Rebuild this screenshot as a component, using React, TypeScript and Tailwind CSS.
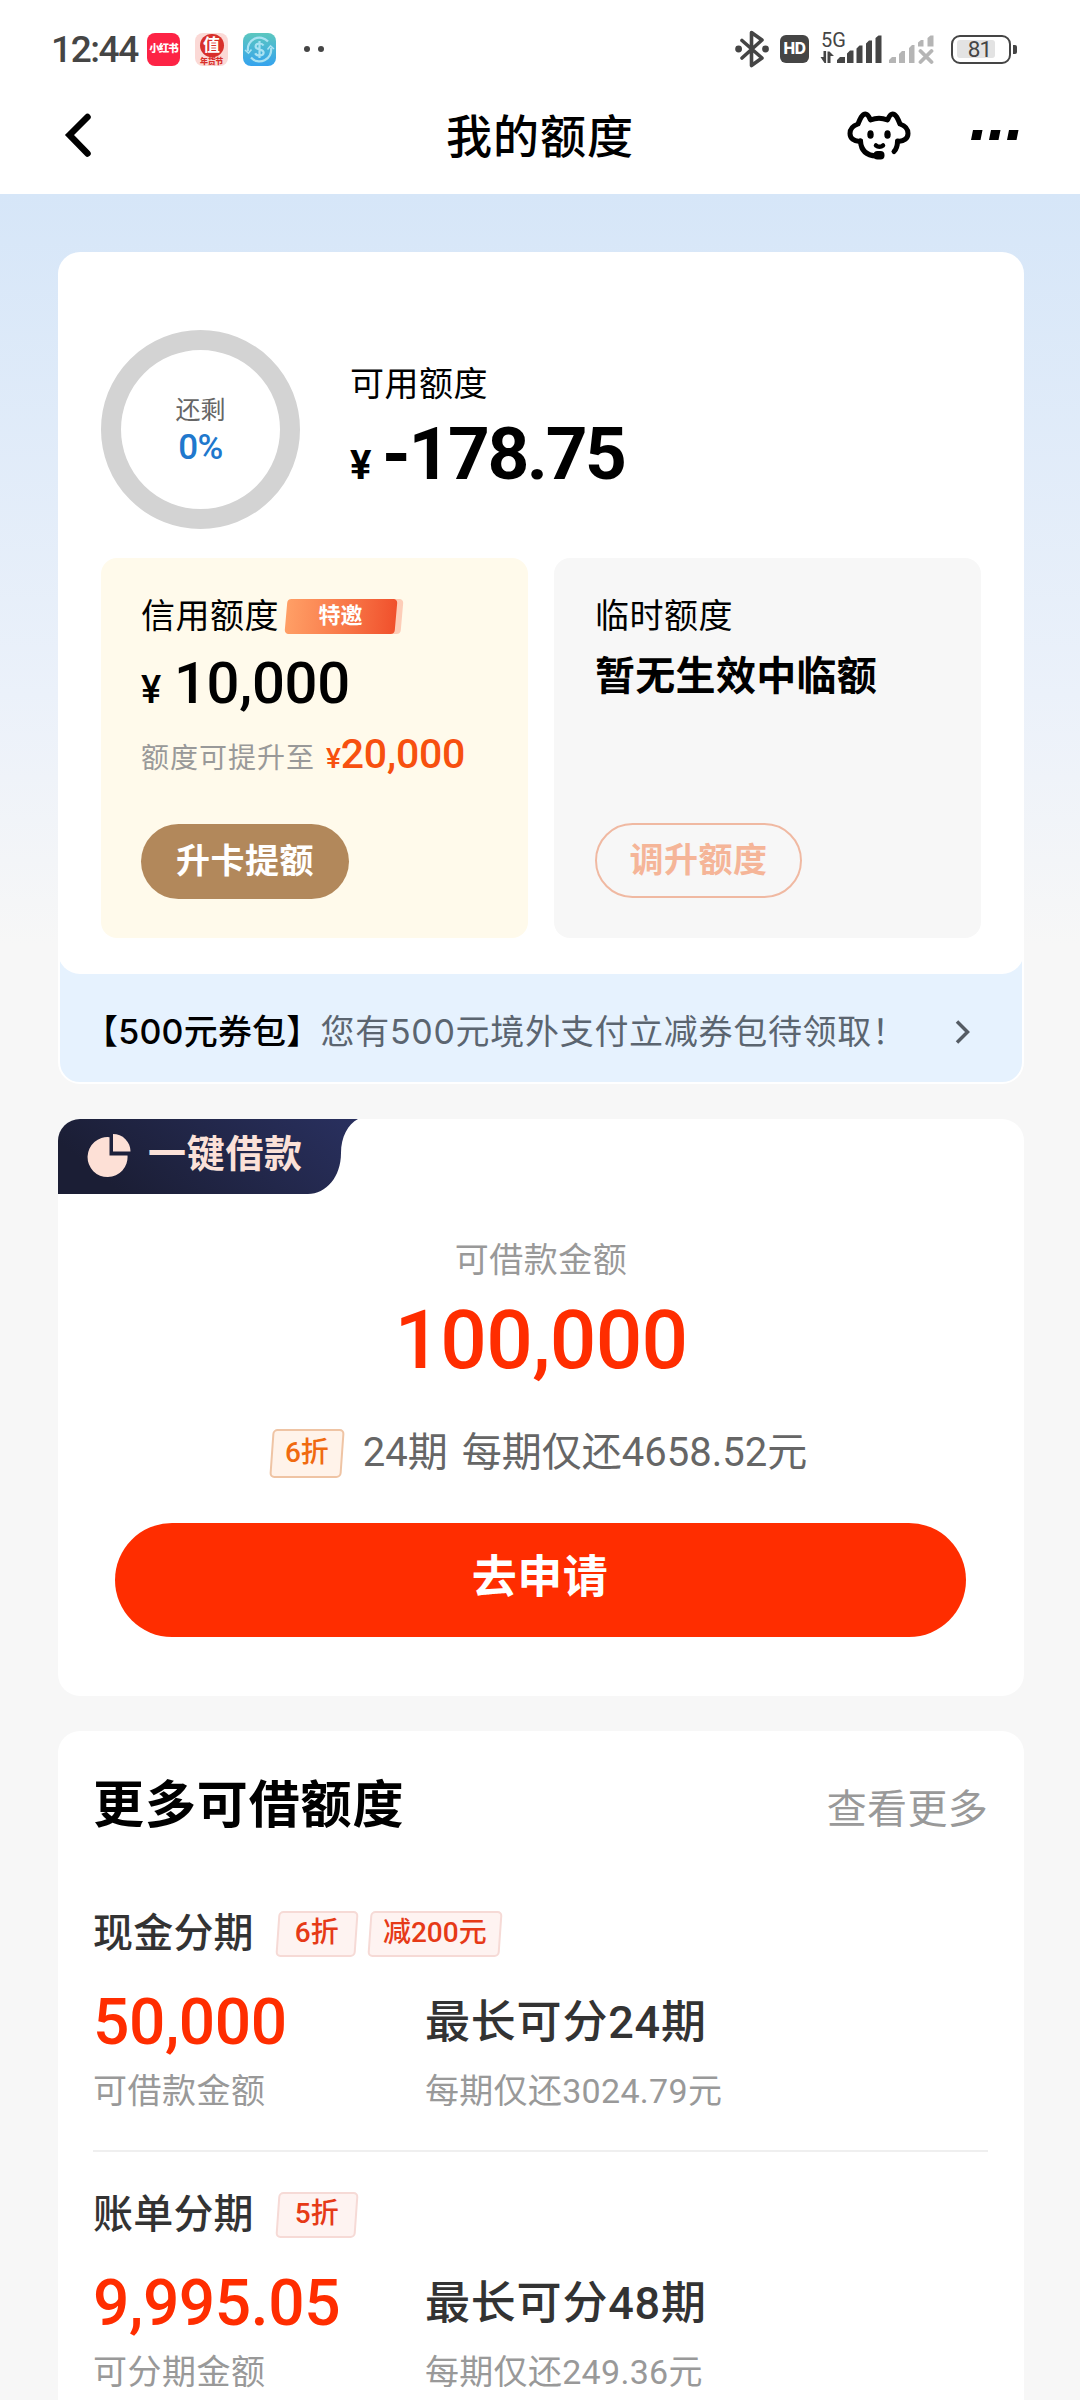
import type { ReactNode } from "react";

const loans = [
  {
    name: "现金分期",
    tags: [
      { text: "6折", width: "w-[80px]" },
      { text: "减200元", width: "w-[132px]" },
    ],
    amount: "50,000",
    label: "可借款金额",
    term: "最长可分24期",
    perTerm: "每期仅还3024.79元",
  },
  {
    name: "账单分期",
    tags: [{ text: "5折", width: "w-[80px]" }],
    amount: "9,995.05",
    label: "可分期金额",
    term: "最长可分48期",
    perTerm: "每期仅还249.36元",
  },
];

function StatusBar() {
  return (
    <div className="flex h-[98px] items-center justify-between pl-[51px] pr-[63px]">
      <div className="flex items-center">
        <span className="w-[96px] text-[37px] leading-[40px] font-medium tracking-[-1.4px] text-[#454545] pt-[2px]">12:44</span>

        {/* Notification icons */}
        <span className="flex h-[33px] w-[33px] items-center justify-center rounded-[8px] bg-[#fd2345] text-[10.5px] font-black tracking-[-1px] text-white">
          小红书
        </span>
        <span className="ml-[15px] flex h-[33px] w-[33px] flex-col items-center overflow-hidden rounded-[8px] bg-[#fbd9d6]">
          <span className="mt-px flex h-[23px] w-[24px] shrink-0 items-center justify-center rounded-full bg-[#d8302b] text-[17px] font-bold leading-none text-white">
            值
          </span>
          <span className="text-[8px] leading-[9px] font-black tracking-[-0.4px] text-[#d8302b]">年货节</span>
        </span>
        <svg className="ml-[15px]" width="33" height="33" viewBox="0 0 33 33">
          <defs>
            <linearGradient id="coin" x1="0" y1="0" x2="0" y2="1">
              <stop offset="0" stopColor="#5cc7bf" />
              <stop offset="1" stopColor="#35a3ee" />
            </linearGradient>
          </defs>
          <rect width="33" height="33" rx="8" fill="url(#coin)" />
          <g fill="none" stroke="#a9e2f2" strokeWidth="2.2">
            <path d="M5 18A11.5 11.5 0 0 1 25 8.500M28 15A11.500 11.500 0 0 1 8 24.500" />
            <path d="M2 17l3.500 3 3-3.500M31 16l-3.500-3-3 3.500" strokeWidth="1.600" />
            <path d="M20.500 12.500c-.8-1.500-2.200-2-4-2-2.200 0-3.900 1-3.900 2.900 0 4 8 2 8 6.200 0 2-1.800 3-4.100 3-2 0-3.600-.8-4.300-2.300M16.500 8v17" />
          </g>
        </svg>
        <span className="ml-[28px] flex gap-[8px]">
          <i className="h-[6px] w-[6px] rounded-full bg-[#454545]" />
          <i className="h-[6px] w-[6px] rounded-full bg-[#454545]" />
        </span>
      </div>

      <div className="flex items-center text-[#454545]">
        {/* Bluetooth */}
        <svg width="34" height="38" viewBox="0 0 34 38" fill="none" stroke="currentColor" strokeWidth="3.6" strokeLinejoin="round" strokeLinecap="round">
          <path d="M7 10.500L27 28l-10.500 7.500V2.500L27 10 7 28" />
          <circle cx="3.600" cy="19" r="3.400" fill="currentColor" stroke="none" />
          <circle cx="30.500" cy="19" r="3.400" fill="currentColor" stroke="none" />
        </svg>
        <span className="ml-[11px] flex h-[28px] w-[29px] items-center justify-center rounded-[6px] bg-[#454545] font-[Inter] text-[15.5px] font-extrabold tracking-[-0.3px] text-white">
          HD
        </span>

        {/* Signal */}
        <span className="relative ml-[11px] block h-[38px] w-[114px]">
          <svg className="block" width="114" height="38" viewBox="0 0 114 38">
            <g fill="currentColor">
              <path d="M0.500 27h3v-6h2.600v12H4.500zM7.500 33V21.500h2L14 26h-3.500v7z" />
              <path d="M17 33v-3l3-3h5v6zM27 33V23.500l3-3h3.500V33zM36.500 33V18.500l3-3h3V33zM46 33V13.500l3-3h3V33zM55.500 33V8l3-2.500h3V33z" />
            </g>
            <g fill="#b5b5b5">
              <path d="M69 33v-3l3-3h4v6zM79 33V24l3-3h3v12zM89 33V18l3-3h2.500v18zM98 16.500v-4l3-2.500h2.500v6.500zM107.500 16.500V8l3-2.500h3v11z" />
            </g>
            <path d="M100.500 21l11 11M111.500 21l-11 11" stroke="#b5b5b5" strokeWidth="3.800" strokeLinecap="round" />
          </svg>
          <span className="absolute left-[1px] top-0 text-[20px] leading-[20px]">5G</span>
        </span>

        {/* Battery */}
        <span className="ml-[17px] flex h-[29px] w-[60px] items-center rounded-[9px] border-[2.5px] border-[#454545] pl-[4px]">
          <span className="flex h-[18px] w-[38px] items-center justify-center rounded-[3px] bg-[#e3e3e3] pl-[7px] text-[22.5px] leading-none tracking-[-0.8px]">
            81
          </span>
        </span>
        <i className="ml-[2px] h-[9px] w-[4px] rounded-r-[2px] bg-[#454545]" />
      </div>
    </div>
  );
}

function NavBar() {
  return (
    <div className="relative flex h-[74px] items-center justify-between pl-[63px] pr-[61px]">
      <svg width="30" height="46" viewBox="0 0 30 46" fill="none" stroke="#000" strokeWidth="6.500" strokeLinecap="round">
        <path d="M24.500 5L6.500 23l18 18.500" strokeLinejoin="miter" />
      </svg>
      <h1 className="absolute inset-x-0 top-[8px] text-center text-[46px] leading-[62px] font-medium tracking-[1px]">我的额度</h1>
      <div className="flex items-center">
        <svg width="64" height="50" viewBox="0 0 64 50" fill="none" stroke="#000" strokeWidth="5" strokeLinecap="round" strokeLinejoin="round">
          <path d="M13.500 31C7 32 3 28 3 23.500c0-5 3.500-8 8-9.500 2-5 4-10 7.500-10 2.500 0 3.500 3 5 6 5-2 12-2 17 0 1.500-3 2.500-6 5-6 3.500 0 5.500 5 7.500 10 4.500 1.500 8 4.500 8 9.500C61 28 57 32 50.500 31c0 5-1 8-3.500 10.500" />
          <path d="M13.500 31c.5 9 5 14.500 16 15" />
          <path d="M29 35.500c2 1.600 5 1.600 7 0" strokeWidth="4.500" />
          <ellipse cx="23.500" cy="24.500" rx="3.200" ry="4.300" fill="#000" stroke="none" />
          <ellipse cx="40.500" cy="24.500" rx="3.200" ry="4.300" fill="#000" stroke="none" />
          <rect x="26.500" y="41" width="11" height="8.500" rx="4" fill="#000" stroke="none" />
        </svg>
        <svg className="ml-[60px]" width="48" height="10" viewBox="0 0 48 10">
          <path d="M2 0h9.500L9.500 10H0zM20 0h9.500l-2 10H18zM38 0h9.500l-2 10H36z" />
        </svg>
      </div>
    </div>
  );
}

type TagProps = { children: ReactNode; className: string; box: string };

function Tag({ children, className, box }: TagProps) {
  return (
    <span className={`relative flex shrink-0 items-center justify-center text-[28px] leading-none font-medium ${className}`}>
      <span className={`absolute inset-0 -skew-x-[4deg] rounded-[5px] border-2 ${box}`} />
      <span className="relative">{children}</span>
    </span>
  );
}

function QuotaCard() {
  return (
    <section className="relative z-10 h-[722px] rounded-[22px] bg-white pt-[78px] pl-[43px]">
      <div className="flex h-[199px] gap-[50px]">
        <div className="flex h-[199px] w-[199px] flex-col items-center rounded-full border-[20px] border-[#d3d3d3] pt-[45px]">
          <span className="text-[25px] leading-[32px] text-[#666]">还剩</span>
          <span className="mt-[3px] text-[35px] leading-[36px] font-medium tracking-[-0.6px] text-[#2078cd]">0%</span>
        </div>
        <div className="pt-[34px]">
          <p className="text-[34px] leading-[40px] tracking-[0.5px]">可用额度</p>
          <p className="mt-[10px] text-[73px] leading-[80px] font-bold tracking-[-2.4px]">
            <span className="mr-[13px] inline-block text-[40px] leading-none">¥</span>-178.75
          </p>
        </div>
      </div>

      <div className="mt-[29px] flex gap-[26px]">
        <div className="h-[380px] w-[427px] rounded-[16px] bg-[#fffaeb] pt-[38px] pl-[40px]">
          <div className="flex h-[40px] items-center">
            <span className="text-[34px] leading-[40px] tracking-[0.5px]">信用额度</span>
            <span className="relative ml-[5px] flex h-[35px] w-[113px] items-center justify-center">
              <span className="absolute inset-y-0 left-[8px] -right-[5px] -skew-x-[5deg] rounded-[4px] bg-[#fdcdb8]" />
              <span className="absolute inset-y-0 left-[2px] right-[1px] -skew-x-[5deg] rounded-[4px] bg-linear-to-r from-[#ff9f66] to-[#f0502c]" />
              <span className="relative text-[22px] leading-none font-bold text-white">特邀</span>
            </span>
          </div>
          <p className="mt-[17px] text-[58px] leading-[60px] font-medium tracking-[-0.3px]">
            <span className="mr-[13px] inline-block text-[38px] leading-none">¥</span>10,000
          </p>
          <p className="mt-[21px] text-[28px] leading-[44px] tracking-[1px] text-[#999]">
            额度可提升至
            <span className="ml-[11px] font-medium tracking-[-0.2px] text-[#f7500f]">
              ¥<span className="text-[41px] leading-none">20,000</span>
            </span>
          </p>
          <button className="mt-[43px] block h-[75px] w-[208px] rounded-full bg-[#b2885b] text-[34px] font-bold tracking-[0.5px] text-white">
            升卡提额
          </button>
        </div>

        <div className="h-[380px] w-[427px] rounded-[16px] bg-[#f7f7f7] pt-[38px] pl-[41px]">
          <p className="text-[34px] leading-[40px] tracking-[0.5px]">临时额度</p>
          <p className="mt-[17px] text-[40px] leading-[48px] font-bold tracking-[0.3px]">暂无生效中临额</p>
          <button className="mt-[122px] block h-[75px] w-[207px] rounded-full border-2 border-[#f0b9a2] text-[34px] font-bold tracking-[0.5px] text-[#f5b598]">
            调升额度
          </button>
        </div>
      </div>
    </section>
  );
}

function CouponBanner() {
  return (
    <a className="-mt-[30px] flex h-[140px] items-center justify-between rounded-b-[22px] border-2 border-white bg-[#e6f2fe] pt-[35px] pr-[52px] pl-[24px] font-[Inter,'Noto_Sans_CJK_SC',sans-serif] text-[34px]">
      <span className="whitespace-nowrap leading-[44px] tracking-[0.7px] text-[#5b6570]">
        <span className="font-medium tracking-[0.2px] text-black">【500元券包】</span>您有500元境外支付立减券包待领取！
      </span>
      <svg className="-ml-[60px] shrink-0" width="15" height="24" viewBox="0 0 15 24" fill="none" stroke="#555c64" strokeWidth="3.500">
        <path d="M2 1.500L12.500 12 2 22.500" />
      </svg>
    </a>
  );
}

function QuickLoan() {
  return (
    <section className="mt-[35px] h-[577px] overflow-hidden rounded-[22px] bg-white">
      <div className="relative flex h-[75px] w-[300px] items-center pl-[29px]">
        <svg className="absolute inset-0" width="300" height="75" viewBox="0 0 300 75">
          <defs>
            <linearGradient id="tab" x1="0" y1="0.300" x2="1" y2="0">
              <stop offset="0" stopColor="#1b1e35" />
              <stop offset="1" stopColor="#29305f" />
            </linearGradient>
          </defs>
          <path d="M0 0H300C290 5 283 18 283 34C283 58 268 75 250 75H0z" fill="url(#tab)" />
        </svg>
        <svg className="relative -mt-[2px]" width="44" height="44" viewBox="0 0 44 44" fill="#fde0d6">
          <path d="M22.500 3.200V21.500H40.500A20 20 0 1 1 22.500 3.200z" />
          <path d="M26 0A17.500 17.500 0 0 1 43.500 17.500H26z" />
        </svg>
        <span className="relative -mt-[5px] ml-[17px] text-[38px] leading-[50px] font-bold tracking-[0.7px] whitespace-nowrap text-[#fbe1d8]">一键借款</span>
      </div>

      <div className="flex flex-col items-center">
        <p className="mt-[46px] text-[34px] leading-[40px] tracking-[0.5px] text-[#999]">可借款金额</p>
        <p className="mt-[18px] text-[82px] leading-[84px] font-medium tracking-[-0.7px] text-[#ff2d00]">100,000</p>
        <div className="mt-[46px] flex h-[50px] items-center pr-[4px]">
          <Tag className="h-[49px] w-[72px] text-[#f06a10]" box="border-[#efc4a4] bg-[#fff3ea]">6折</Tag>
          <span className="ml-[20px] text-[40px] leading-[50px] [word-spacing:4px] text-[#666]">24期 每期仅还4658.52元</span>
        </div>
        <button className="mt-[45px] mr-[2px] h-[114px] w-[851px] rounded-full bg-[#ff2d00] pb-[5px] text-[45px] font-bold tracking-[0.5px] text-white">
          去申请
        </button>
      </div>
    </section>
  );
}

function MoreLoans() {
  return (
    <section className="mt-[35px] h-[720px] rounded-t-[22px] bg-white pt-[45px] pr-[36px] pl-[35px]">
      <div className="flex h-[60px] items-center justify-between">
        <h2 className="text-[51px] leading-[60px] font-bold tracking-[0.9px]">更多可借额度</h2>
        <span className="pt-[8px] text-[40px] leading-[60px] tracking-[0.3px] text-[#999]">查看更多</span>
      </div>

      {loans.map((loan, i) => (
        <div key={loan.name} className={i === 0 ? "mt-[75px]" : "mt-[39px] border-t-2 border-[#efefef] pt-[40px]"}>
          <div className="flex h-[46px] items-center">
            <h3 className="mr-[23px] text-[40px] leading-[46px] font-medium tracking-[0.2px] text-[#333]">{loan.name}</h3>
            {loan.tags.map((tag) => (
              <Tag key={tag.text} className={`mr-[12px] h-[46px] pb-[3px] text-[#e63a17] ${tag.width}`} box="border-[#f6dad6] bg-[#fef3f1]">
                {tag.text}
              </Tag>
            ))}
          </div>
          <div className="mt-[31px] grid grid-cols-[332px_1fr]">
            <span className="text-[64px] leading-[70px] font-medium tracking-[-0.4px] text-[#ff2d00]">{loan.amount}</span>
            <span className="text-[45px] leading-[70px] font-medium tracking-[0.8px] text-[#333]">{loan.term}</span>
            <span className="mt-[13px] text-[34px] leading-[40px] tracking-[0.5px] text-[#999]">{loan.label}</span>
            <span className="mt-[13px] text-[34px] leading-[40px] tracking-[0.3px] text-[#999]">{loan.perTerm}</span>
          </div>
        </div>
      ))}
    </section>
  );
}

export default function App() {
  return (
    <div className="h-[2400px] w-[1080px] overflow-hidden bg-[#f7f7f7] font-[Roboto,'Noto_Sans_CJK_SC',sans-serif] text-black">
      <header className="h-[194px] bg-white">
        <StatusBar />
        <NavBar />
      </header>
      <main className="bg-[linear-gradient(to_bottom,#d6e6f8_0px,#ebf1fa_500px,#f7f7f7_750px)] pt-[58px] pr-[56px] pl-[58px]">
        <QuotaCard />
        <CouponBanner />
        <QuickLoan />
        <MoreLoans />
      </main>
    </div>
  );
}
